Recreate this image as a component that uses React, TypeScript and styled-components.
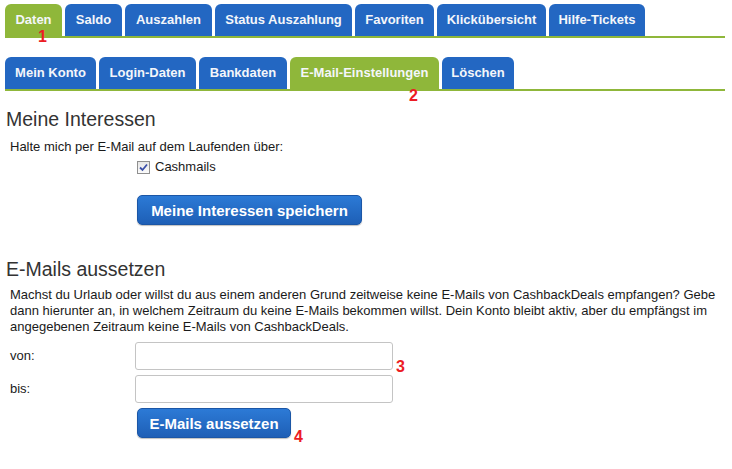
import React from "react";
import styled, { createGlobalStyle } from "styled-components";

const GlobalStyle = createGlobalStyle`
  html, body { margin: 0; padding: 0; background: #fff; }
  body { font-family: "Liberation Sans", Arial, sans-serif; color: #222; }
`;

const BLUE = "#2367c2";
const GREEN = "#8fb73a";

const Page = styled.div`
  width: 732px;
  height: 469px;
  padding: 4px 0 0 5px;
  box-sizing: border-box;
  position: relative;
  overflow: hidden;
`;

const TabBar = styled.div<{ $mt?: number }>`
  display: flex;
  gap: 3px;
  width: 720px;
  border-bottom: 2px solid ${GREEN};
  margin-top: ${(p) => p.$mt ?? 0}px;
`;

const Tab = styled.div<{ $active?: boolean; $w: number }>`
  position: relative;
  width: ${(p) => p.$w}px;
  height: 32px;
  box-sizing: border-box;
  background: ${(p) => (p.$active ? GREEN : BLUE)};
  border-radius: 6px 6px 0 0;
  color: #f4f6fa;
  font-weight: bold;
  font-size: 13px;
  line-height: 32px;
  text-align: center;
  white-space: nowrap;
`;

const Marker = styled.span<{ $x: number; $y: number }>`
  position: absolute;
  left: ${(p) => p.$x}px;
  top: ${(p) => p.$y}px;
  color: #ec1c24;
  font-weight: bold;
  font-size: 16px;
  line-height: 16px;
  font-family: "Liberation Sans", Arial, sans-serif;
`;

const Heading = styled.h2<{ $mt: number }>`
  margin: ${(p) => p.$mt}px 0 0 1px;
  font-weight: normal;
  font-size: 19.5px;
  line-height: 22px;
  color: #333;
`;

const Section = styled.div`
  padding-left: 5px;
  font-size: 13px;
  line-height: 16px;
  color: #1a1a1a;
`;

const Text = styled.p<{ $mt: number }>`
  margin: ${(p) => p.$mt}px 0 0 0;
  width: 712px;
`;

const FieldRow = styled.div<{ $mt: number }>`
  display: flex;
  align-items: center;
  margin-top: ${(p) => p.$mt}px;
`;

const Label = styled.span`
  width: 127px;
  flex: none;
`;

const CheckLabel = styled.label`
  display: flex;
  align-items: center;
  gap: 5px;
  margin-left: 127px;
`;

const Box = styled.span`
  width: 13px;
  height: 13px;
  box-sizing: border-box;
  border: 1px solid #8f8f8f;
  background: linear-gradient(#e6e6e6, #fbfbfb);
  display: inline-flex;
  align-items: center;
  justify-content: center;
`;

const Button = styled.button<{ $w: number }>`
  width: ${(p) => p.$w}px;
  height: 30px;
  margin-left: 127px;
  border: 1px solid #1b56a6;
  border-radius: 5px;
  background: linear-gradient(#2c7ad6, #1e5fb6);
  color: #fff;
  font-family: "Liberation Sans", Arial, sans-serif;
  font-weight: bold;
  font-size: 15px;
  padding: 0;
  box-shadow: 0 1px 1px rgba(0, 0, 0, 0.25);
  position: relative;
`;

const Input = styled.input`
  width: 258px;
  height: 28px;
  box-sizing: border-box;
  border: 1px solid #c4c4c4;
  border-radius: 3px;
  margin-left: -2px;
  position: relative;
`;

const InputWrap = styled.div`
  position: relative;
`;

const ButtonWrap = styled.div<{ $mt: number }>`
  margin-top: ${(p) => p.$mt}px;
  display: flex;
`;

const topTabs: [string, number][] = [
  ["Daten", 57],
  ["Saldo", 57],
  ["Auszahlen", 87],
  ["Status Auszahlung", 137],
  ["Favoriten", 79],
  ["Klickübersicht", 109],
  ["Hilfe-Tickets", 96],
];

const subTabs: [string, number][] = [
  ["Mein Konto", 91],
  ["Login-Daten", 97],
  ["Bankdaten", 88],
  ["E-Mail-Einstellungen", 149],
  ["Löschen", 72],
];

export default function App() {
  return (
    <Page>
      <GlobalStyle />
      <TabBar>
        {topTabs.map(([t, w], i) => (
          <Tab key={t} $w={w} $active={i === 0}>
            {t}
            {i === 0 && (
              <Marker $x={33} $y={25}>
                1
              </Marker>
            )}
          </Tab>
        ))}
      </TabBar>
      <TabBar $mt={19}>
        {subTabs.map(([t, w], i) => (
          <Tab key={t} $w={w} $active={i === 3}>
            {t}
            {i === 3 && (
              <Marker $x={119} $y={31}>
                2
              </Marker>
            )}
          </Tab>
        ))}
      </TabBar>
      <Heading $mt={17}>Meine Interessen</Heading>
      <Section>
        <Text $mt={9}>Halte mich per E-Mail auf dem Laufenden über:</Text>
        <FieldRow $mt={4}>
          <CheckLabel>
            <Box>
              <svg width="9" height="9" viewBox="0 0 9 9">
                <path d="M1 4.5 L3.5 7 L8 1.5" stroke="#3b4fa8" strokeWidth="1.8" fill="none" />
              </svg>
            </Box>
            Cashmails
          </CheckLabel>
        </FieldRow>
        <ButtonWrap $mt={20}>
          <Button $w={225}>Meine Interessen speichern</Button>
        </ButtonWrap>
      </Section>
      <Heading $mt={33}>E-Mails aussetzen</Heading>
      <Section>
        <Text $mt={7}>
          Machst du Urlaub oder willst du aus einem anderen Grund zeitweise keine E-Mails von CashbackDeals empfangen? Gebe
          dann hierunter an, in welchem Zeitraum du keine E-Mails bekommen willst. Dein Konto bleibt aktiv, aber du empfängst im
          angegebenen Zeitraum keine E-Mails von CashbackDeals.
        </Text>
        <FieldRow $mt={7}>
          <Label>von:</Label>
          <InputWrap>
            <Input />
            <Marker $x={259} $y={17}>
              3
            </Marker>
          </InputWrap>
        </FieldRow>
        <FieldRow $mt={5}>
          <Label>bis:</Label>
          <InputWrap>
            <Input />
          </InputWrap>
        </FieldRow>
        <ButtonWrap $mt={5}>
          <Button $w={154}>
            E-Mails aussetzen
            <Marker $x={156} $y={20}>
              4
            </Marker>
          </Button>
        </ButtonWrap>
      </Section>
    </Page>
  );
}
